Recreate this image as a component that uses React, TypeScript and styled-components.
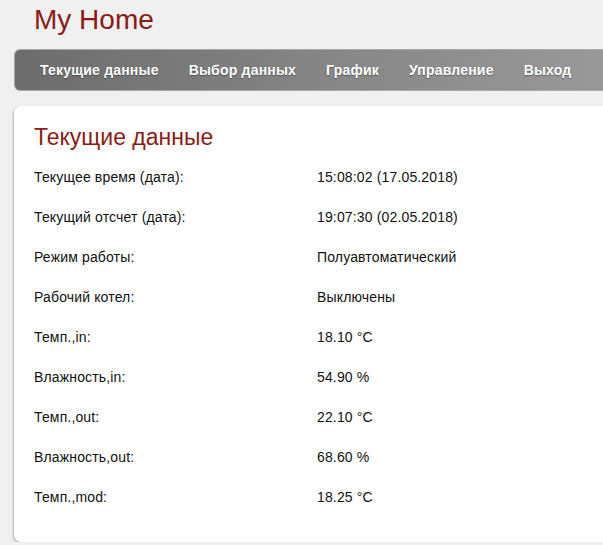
import React from "react";
import styled, { createGlobalStyle } from "styled-components";

const Global = createGlobalStyle`
  html, body { margin: 0; padding: 0; background: #f0f0f0; overflow: hidden; }
  body { font-family: "Liberation Sans", Arial, sans-serif; }
`;

const Page = styled.div`
  width: 760px;
  padding: 4px 0 0 14px;
`;

const Title = styled.h1`
  margin: 0 0 13px 20px;
  font-size: 28px;
  line-height: 32px;
  font-weight: normal;
  color: #8b1b13;
`;

const Nav = styled.nav`
  display: flex;
  align-items: center;
  gap: 30px;
  height: 40px;
  padding-left: 25px;
  border: 1px solid #a8a8a8;
  border-radius: 6px;
  background: linear-gradient(to right, #6c6c6c 0%, #888 45%, #a4a4a4 100%);
`;

const NavItem = styled.a`
  font-size: 14px;
  font-weight: bold;
  letter-spacing: 0.2px;
  color: #fff;
  text-decoration: none;
  text-shadow: 0 1px 1px rgba(0, 0, 0, 0.35);
  white-space: nowrap;
`;

const Card = styled.section`
  margin-top: 15px;
  background: #fff;
  border-radius: 7px;
  box-shadow: -1px 1px 2px rgba(0, 0, 0, 0.25);
  padding: 17px 0 25px 20px;
`;

const Heading = styled.h2`
  margin: 0 0 6px;
  font-size: 23px;
  line-height: 28px;
  font-weight: normal;
  color: #8b1b13;
`;

const Rows = styled.div`
  display: grid;
  grid-template-columns: 283px 1fr;
  grid-auto-rows: 40px;
  align-items: center;
  font-size: 14px;
  line-height: 16px;
  letter-spacing: 0.15px;
  color: #111;
`;

const Cell = styled.div``;

const data: [string, string][] = [
  ["Текущее время (дата):", "15:08:02 (17.05.2018)"],
  ["Текущий отсчет (дата):", "19:07:30 (02.05.2018)"],
  ["Режим работы:", "Полуавтоматический"],
  ["Рабочий котел:", "Выключены"],
  ["Темп.,in:", "18.10 °C"],
  ["Влажность,in:", "54.90 %"],
  ["Темп.,out:", "22.10 °C"],
  ["Влажность,out:", "68.60 %"],
  ["Темп.,mod:", "18.25 °C"],
];

const navItems = ["Текущие данные", "Выбор данных", "График", "Управление", "Выход"];

export default function App() {
  return (
    <>
      <Global />
      <Page>
        <Title>My Home</Title>
        <Nav>
          {navItems.map((n) => (
            <NavItem key={n} href="#">
              {n}
            </NavItem>
          ))}
        </Nav>
        <Card>
          <Heading>Текущие данные</Heading>
          <Rows>
            {data.map(([l, v]) => (
              <React.Fragment key={l}>
                <Cell>{l}</Cell>
                <Cell>{v}</Cell>
              </React.Fragment>
            ))}
          </Rows>
        </Card>
      </Page>
    </>
  );
}
